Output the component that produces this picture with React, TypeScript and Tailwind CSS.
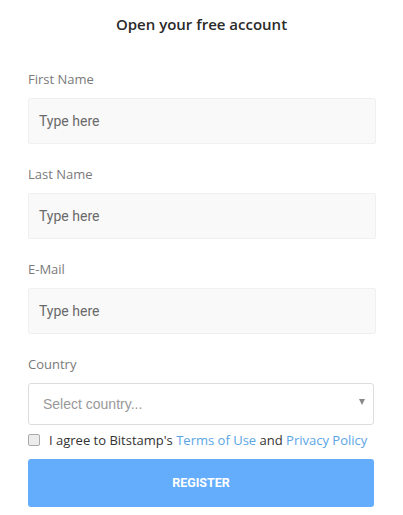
const fields = [
  { id: "first", label: "First Name" },
  { id: "last", label: "Last Name" },
  { id: "email", label: "E-Mail" },
];

export default function App() {
  return (
    <div className="w-[403px] h-[515px] bg-white font-['Open_Sans',sans-serif]">
      <h1 className="pt-[13px] h-[70px] text-center text-[15px] leading-[22px] font-semibold text-[#2a2a2a]">
        Open your free account
      </h1>
      <form className="pl-[28px] pr-[27px]">
        {fields.map((f) => (
          <div key={f.id} className="mb-[21px]">
            <label htmlFor={f.id} className="block h-[18px] text-[13px] leading-[18px] text-[#7a7a7a]">
              {f.label}
            </label>
            <input
              id={f.id}
              placeholder="Type here"
              className="mt-[10px] block h-[46px] w-full rounded-[2px] border border-[#f0f0f0] bg-[#f9f9f9] px-[10px] font-['Roboto',sans-serif] text-[14px] text-[#555] placeholder:text-[#6a6a6a] outline-none"
            />
          </div>
        ))}
        <div className="pr-[2px]">
          <label className="block h-[18px] text-[13px] leading-[18px] text-[#7a7a7a]">Country</label>
          <div className="relative mt-[10px] flex h-[42px] items-center rounded-[3px] border border-[#ddd] bg-white pl-[14px]">
            <span className="font-['Liberation_Sans',sans-serif] text-[14px] text-[#999]">Select country...</span>
            <span className="absolute right-[8px] top-[15px] h-0 w-0 border-x-[3.5px] border-t-[6px] border-x-transparent border-t-[#888]" />
          </div>
          <div className="mt-[8px] flex h-[14px] items-center gap-[9px]">
            <span className="h-[12px] w-[12px] rounded-[2px] border border-[#aaa] bg-[#ececec]" />
            <span className="text-[13px] leading-[18px] text-[#333]">
              I agree to Bitstamp's <a className="text-[#5aa5e6]">Terms of Use</a> and{" "}
              <a className="text-[#5aa5e6]">Privacy Policy</a>
            </span>
          </div>
          <button
            type="button"
            className="mt-[12px] block h-[48px] w-full rounded-[3px] bg-[#64adfd] font-['Roboto',sans-serif] text-[12.5px] font-bold text-white"
          >
            REGISTER
          </button>
        </div>
      </form>
    </div>
  );
}
